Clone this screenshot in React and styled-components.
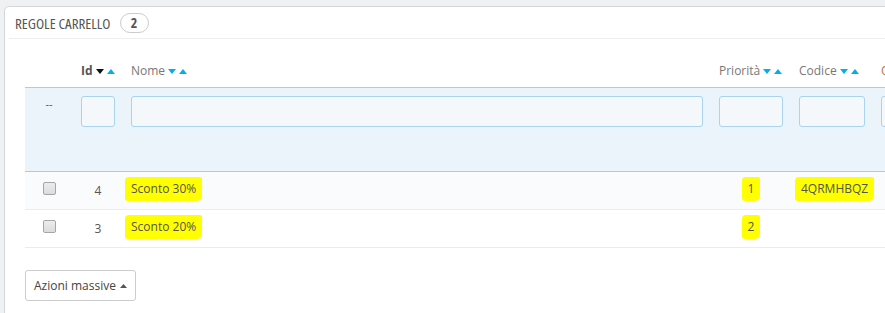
import React from 'react'
import styled, { createGlobalStyle } from 'styled-components'

const Global = createGlobalStyle`
  html, body { margin: 0; padding: 0; background: #eff1f2; overflow: hidden; }
  body { font-family: "Open Sans", "Liberation Sans", sans-serif; font-size: 12px; color: #555; }
`

const Page = styled.div`
  padding: 6px 0 0 4px;
  width: 1000px;
`

const Panel = styled.section`
  background: #fff;
  border: 1px solid #d3d8db;
  border-radius: 5px;
  padding: 0 20px 12px 20px;
  min-height: 320px;
`

const Heading = styled.div`
  display: flex;
  align-items: center;
  gap: 9px;
  height: 31px;
  margin: 0 -20px 0 -16px;
  padding-left: 6px;
  border-bottom: 1px solid #eee;
  font-family: "Open Sans", "Liberation Sans", sans-serif;
  font-size: 15px;
  color: #555;
  text-transform: uppercase;
`

const Title = styled.span`
  font-stretch: 78%;
`

const Badge = styled.span`
  display: inline-flex;
  align-items: center;
  justify-content: center;
  width: 27px;
  height: 18px;
  border: 1px solid #ccc;
  border-radius: 10px;
  font-weight: bold;
  font-size: 14px;
  font-stretch: 85%;
  color: #555;
`

const Table = styled.table`
  border-collapse: collapse;
  table-layout: fixed;
  width: 940px;
`

const Th = styled.th`
  height: 40px;
  padding: 0 8px 8px;
  vertical-align: bottom;
  text-align: left;
  font-weight: normal;
  color: #666;
  white-space: nowrap;
  overflow: hidden;
`

const Label = styled.span`
  font-weight: ${p => (p.$bold ? 'bold' : 'normal')};
  color: ${p => p.$color || (p.$bold ? '#555' : '#777')};
`

const Arrows = styled.span`
  display: inline-flex;
  gap: 3px;
  margin-left: 3px;
  vertical-align: 1px;
`

const FilterRow = styled.tr`
  background: #ebf4fb;
  border-top: 1px solid #a0d0eb;
  border-bottom: 1px solid #a0d0eb;
`

const FilterCell = styled.td`
  height: 75px;
  padding: 8px 8px 0;
  vertical-align: top;
  color: #555;
`

const Dash = styled.div`
  line-height: 16px;
  text-align: center;
  font-size: 11px;
`

const Input = styled.div`
  height: 29px;
  border: 1px solid #a8d4ec;
  border-radius: 3px;
  background: #f4f8fb;
`

const Row = styled.tr`
  background: ${p => (p.$alt ? '#fafbfc' : '#fff')};
  border-bottom: 1px solid #eaedef;
`

const Td = styled.td`
  height: 37px;
  padding: 0 8px;
  text-align: ${p => p.$align || 'left'};
  color: #555;
`

const Check = styled.span`
  display: inline-block;
  width: 11px;
  height: 11px;
  border: 1px solid #a6a6a6;
  border-radius: 2px;
  background: linear-gradient(#ececec, #dcdcdc);
  vertical-align: middle;
  margin-top: -6px;
`

const Mark = styled.span`
  display: inline-block;
  background: #ffff00;
  padding: 3px 6px 4px;
  border-radius: 4px 2px 5px 3px;
  margin-left: ${p => p.$ml || 0}px;
  margin-top: -3px;
`

const Footer = styled.div`
  margin-top: 22px;
`

const Button = styled.button`
  display: inline-flex;
  align-items: center;
  gap: 4px;
  height: 31px;
  width: 111px;
  padding: 0 8px;
  border: 1px solid #ccc;
  border-radius: 3px;
  background: #fff;
  font-family: "Open Sans", "Liberation Sans", sans-serif;
  font-size: 12px;
  color: #444;
`

const Tri = ({ up, color }) => (
  <svg width="8" height="5" viewBox="0 0 8 5">
    {up ? <polygon points="0,5 8,5 4,0" fill={color} /> : <polygon points="0,0 8,0 4,5" fill={color} />}
  </svg>
)

const SortHead = ({ children, active, bold }) => (
  <>
    <Label $bold={bold}>{children}</Label>
    <Arrows>
      <Tri color={active ? '#111' : '#00aff0'} />
      <Tri up color="#00aff0" />
    </Arrows>
  </>
)

const rows = [
  { id: 4, name: 'Sconto 30%', prio: '1', code: '4QRMHBQZ' },
  { id: 3, name: 'Sconto 20%', prio: '2', code: '' },
]

export default function App() {
  return (
    <Page>
      <Global />
      <Panel>
        <Heading>
          <Title>Regole carrello</Title>
          <Badge>2</Badge>
        </Heading>
        <Table>
          <colgroup>
            <col style={{ width: 48 }} />
            <col style={{ width: 50 }} />
            <col style={{ width: 588 }} />
            <col style={{ width: 80 }} />
            <col style={{ width: 82 }} />
            <col style={{ width: 92 }} />
          </colgroup>
          <thead>
            <tr>
              <Th />
              <Th><SortHead active bold>Id</SortHead></Th>
              <Th><SortHead>Nome</SortHead></Th>
              <Th><SortHead>Priorità</SortHead></Th>
              <Th><SortHead>Codice</SortHead></Th>
              <Th><Label $color="#c86b3c">Quantità</Label></Th>
            </tr>
            <FilterRow>
              <FilterCell><Dash>--</Dash></FilterCell>
              <FilterCell><Input /></FilterCell>
              <FilterCell><Input /></FilterCell>
              <FilterCell><Input /></FilterCell>
              <FilterCell><Input /></FilterCell>
              <FilterCell><Input /></FilterCell>
            </FilterRow>
          </thead>
          <tbody>
            {rows.map((r, i) => (
              <Row key={r.id} $alt={i === 0}>
                <Td $align="center"><Check /></Td>
                <Td $align="center">{r.id}</Td>
                <Td><Mark $ml={-6}>{r.name}</Mark></Td>
                <Td $align="center"><Mark>{r.prio}</Mark></Td>
                <Td>{r.code && <Mark $ml={-4}>{r.code}</Mark>}</Td>
                <Td />
              </Row>
            ))}
          </tbody>
        </Table>
        <Footer>
          <Button>
            Azioni massive
            <svg width="7" height="4" viewBox="0 0 7 4"><polygon points="0,4 7,4 3.5,0" fill="#555" /></svg>
          </Button>
        </Footer>
      </Panel>
    </Page>
  )
}
